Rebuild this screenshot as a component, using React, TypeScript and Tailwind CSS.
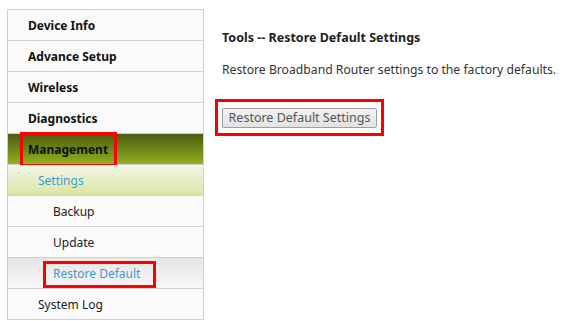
import React from "react";

type Item = { label: string; level: 0 | 1 | 2; kind?: "active" | "sub" | "current" };

const items: Item[] = [
  { label: "Device Info", level: 0 },
  { label: "Advance Setup", level: 0 },
  { label: "Wireless", level: 0 },
  { label: "Diagnostics", level: 0 },
  { label: "Management", level: 0, kind: "active" },
  { label: "Settings", level: 1, kind: "sub" },
  { label: "Backup", level: 2 },
  { label: "Update", level: 2 },
  { label: "Restore Default", level: 2, kind: "current" },
  { label: "System Log", level: 1 },
];

function Row({ item }: { item: Item }) {
  let bg = "bg-[#fafafa]";
  if (item.kind === "active") bg = "bg-gradient-to-b from-[#4a5c10] to-[#93b21f]";
  if (item.kind === "sub") bg = "bg-gradient-to-b from-[#f4f7e8] to-[#d9e6a2]";
  if (item.kind === "current") bg = "bg-gradient-to-b from-[#e6e6e6] to-[#f7f7f7]";
  const pad = item.level === 0 ? "pl-[20px]" : item.level === 1 ? "pl-[30px]" : "pl-[45px]";
  const text =
    item.level === 0
      ? "font-bold text-[#111] text-[12px]"
      : item.kind === "sub" || item.kind === "current"
      ? "text-[#3d9ad6] text-[12px]"
      : "text-[#222] text-[12px]";
  return (
    <div className={`relative h-[31px] border-b border-[#d0d0d0] flex items-center pt-[1px] ${bg} ${pad}`}>
      <span className={text}>{item.label}</span>
      {item.kind === "active" && (
        <div className="absolute left-[12px] top-[-2px] w-[97px] h-[35px] border-[3px] border-[#ff0000]" />
      )}
      {item.kind === "current" && (
        <div className="absolute left-[35px] top-[3px] w-[113px] h-[27px] border-[3px] border-[#ff0000]" />
      )}
    </div>
  );
}

export default function App() {
  return (
    <div
      className="w-[569px] h-[321px] bg-white flex overflow-hidden"
      style={{ fontFamily: '"Noto Sans", "Open Sans", sans-serif' }}
    >
      <div className="ml-[7px] mt-[9px] w-[197px] shrink-0 border-l border-r border-t border-[#d0d0d0] self-start">
        {items.map((it) => (
          <Row key={it.label} item={it} />
        ))}
      </div>
      <div className="flex-1 pl-[18px] pt-[29px] flex flex-col items-start whitespace-nowrap">
        <div className="text-[12.5px] font-bold text-[#222] leading-[18px]">Tools -- Restore Default Settings</div>
        <div className="mt-[14px] text-[12.2px] text-[#333] leading-[18px]">
          Restore Broadband Router settings to the factory defaults.
        </div>
        <div className="mt-[20px] ml-[-7px] w-[169px] h-[37px] border-[3px] border-[#ff0000] flex items-center justify-center">
          <button className="w-[155px] h-[20px] border border-[#a0a0a0] rounded-[2px] bg-gradient-to-b from-[#f4f4f4] to-[#e2e2e2] text-[12.5px] text-[#555] leading-[18px] flex items-center justify-center">
            Restore Default Settings
          </button>
        </div>
      </div>
    </div>
  );
}
